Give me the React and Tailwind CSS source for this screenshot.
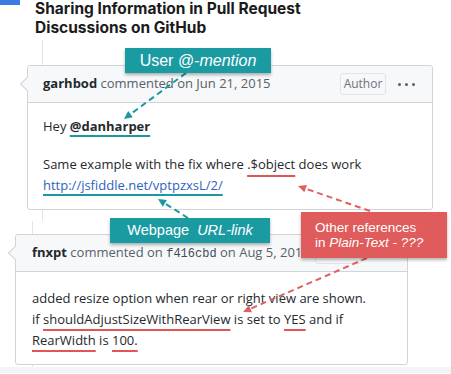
import React from 'react';

// dashed arrow with a filled head at (x2, y2)
const Arrow = ({ x1, y1, x2, y2, color }) => {
  const angle = Math.atan2(y2 - y1, x2 - x1);
  const len = 9;
  const spread = 0.45;
  const bx = x2 - Math.cos(angle) * len;
  const by = y2 - Math.sin(angle) * len;
  const p1 = `${x2 - Math.cos(angle - spread) * len},${y2 - Math.sin(angle - spread) * len}`;
  const p2 = `${x2 - Math.cos(angle + spread) * len},${y2 - Math.sin(angle + spread) * len}`;
  return (
    <g>
      <line x1={x1} y1={y1} x2={bx} y2={by} stroke={color} strokeWidth="2" strokeDasharray="6 4" />
      <polygon points={`${x2},${y2} ${p1} ${p2}`} fill={color} />
    </g>
  );
};

const Dots = () => (
  <div className="flex items-center gap-[4px]">
    <span className="h-[3px] w-[3px] rounded-full bg-[#586069]" />
    <span className="h-[3px] w-[3px] rounded-full bg-[#586069]" />
    <span className="h-[3px] w-[3px] rounded-full bg-[#586069]" />
  </div>
);

const Badge = () => (
  <span className="flex h-[22px] w-[46px] items-center justify-center rounded-[3px] border border-[#e1e4e8] text-[12px] text-[#6a737d]">
    Author
  </span>
);

const Caret = () => (
  <span className="absolute left-[-6px] top-[13px] h-[10px] w-[10px] rotate-45 border-b border-l border-[#d1d5da] bg-[#f6f8fa]" />
);

export default function App() {
  return (
    <div className="relative h-[374px] w-[451px] overflow-hidden bg-white font-['Open_Sans',sans-serif] text-[13px] text-[#24292e]">
      <div className="absolute left-0 top-0 h-[5px] w-[20px] bg-[#3d7be4]" />

      <h1 className="h-[40px] pl-[35px] font-['Inter',sans-serif] text-[15.5px] font-bold leading-[18.5px] text-[#1b1b1b]">
        Sharing Information in Pull Request
        <br />
        Discussions on GitHub
      </h1>
      <div className="ml-[42px] h-[25px] w-px bg-[#e1e4e8]" />

      {/* first comment */}
      <div className="relative ml-[27px] w-[406px] rounded-[3px] border border-[#d1d5da]">
        <Caret />
        <div className="flex h-[37px] items-center justify-between rounded-t-[3px] border-b border-[#d1d5da] bg-[#f6f8fa] pl-[15px] pr-[17px]">
          <p className="text-[#586069]">
            <span className="font-bold text-[#24292e]">garhbod</span> commented on Jun 21, 2015
          </p>
          <div className="flex items-center gap-[12px]">
            <Badge />
            <Dots />
          </div>
        </div>
        <div className="px-[15px] pb-[12.5px] pt-[13px] leading-[21.5px]">
          <p>
            Hey{' '}
            <span className="font-bold underline decoration-[#1a9aa0] decoration-2 underline-offset-[4px]">
              @danharper
            </span>
          </p>
          <p className="mt-[16px]">
            Same example with the fix where{' '}
            <span className="underline decoration-[#e05555] decoration-2 underline-offset-[6px]">.$object</span> does work
          </p>
          <p>
            <span className="text-[#2f62c2] underline decoration-[#1a9aa0] decoration-2 underline-offset-[4px]">
              http://jsfiddle.net/vptpzxsL/2/
            </span>
          </p>
        </div>
      </div>

      <div className="ml-[42px] h-[11px] w-px bg-[#e1e4e8]" />
      <div className="ml-[32px] h-[13px] w-px bg-[#e1e4e8]" />

      {/* second comment */}
      <div className="relative ml-[15px] w-[393px] rounded-[3px] border border-[#d1d5da]">
        <Caret />
        <div className="flex h-[37px] items-center justify-between rounded-t-[3px] border-b border-[#d1d5da] bg-[#f6f8fa] pl-[16px] pr-[17px]">
          <p className="whitespace-nowrap text-[#586069]">
            <span className="font-bold text-[#24292e]">fnxpt</span> commented on{' '}
            <span className="font-['Liberation_Mono',monospace] text-[12px] text-[#444d56]">f416cbd</span> on Aug 5, 2014
          </p>
          <div className="flex items-center gap-[12px]">
            <Badge />
            <Dots />
          </div>
        </div>
        <div className="px-[16px] pb-[13px] pt-[16px] leading-[21px]">
          <p>added resize option when rear or right view are shown.</p>
          <p>
            if{' '}
            <span className="underline decoration-[#e05555] decoration-2 underline-offset-[5px]">
              shouldAdjustSizeWithRearView
            </span>{' '}
            is set to <span className="underline decoration-[#e05555] decoration-2 underline-offset-[5px]">YES</span> and if
          </p>
          <p>
            <span className="underline decoration-[#e05555] decoration-2 underline-offset-[5px]">RearWidth</span> is{' '}
            <span className="underline decoration-[#e05555] decoration-2 underline-offset-[5px]">100.</span>
          </p>
        </div>
      </div>

      <div className="ml-[32px] h-[2px] w-px bg-[#e1e4e8]" />
      <div className="h-[6px] bg-[#f3f4f6]" />

      <svg className="pointer-events-none absolute inset-0 z-10" width="451" height="374">
        <Arrow x1={186} y1={73} x2={124} y2={119} color="#1a9aa0" />
        <Arrow x1={188} y1={218} x2={158} y2={199} color="#1a9aa0" />
        <Arrow x1={370} y1={211} x2={298} y2={186} color="#e06060" />
        <Arrow x1={367} y1={258} x2={243} y2={312} color="#e06060" />
      </svg>

      {/* callouts */}
      <div className="absolute left-[125px] top-[48px] z-20 flex h-[25px] w-[146px] items-center justify-center bg-[#1a9ba2] font-['Liberation_Sans',sans-serif] text-[16px] text-white shadow-[0_2px_3px_rgba(0,0,0,0.3)]">
        User&nbsp;<span className="italic">@-mention</span>
      </div>
      <div className="absolute left-[110px] top-[218px] z-20 flex h-[25px] w-[160px] items-center justify-center bg-[#1a9ba2] font-['Liberation_Sans',sans-serif] text-[14.5px] text-white shadow-[0_2px_3px_rgba(0,0,0,0.3)]">
        Webpage&nbsp;&nbsp;<span className="italic">URL-link</span>
      </div>
      <div className="absolute left-[301px] top-[212px] z-20 h-[46px] w-[146px] bg-[#e05b5b] pl-[14px] pt-[8px] font-['Liberation_Sans',sans-serif] text-[13.5px] leading-[15px] text-white shadow-[0_2px_3px_rgba(0,0,0,0.3)]">
        <p>Other references</p>
        <p>
          in <span className="italic">Plain-Text - ???</span>
        </p>
      </div>
    </div>
  );
}
